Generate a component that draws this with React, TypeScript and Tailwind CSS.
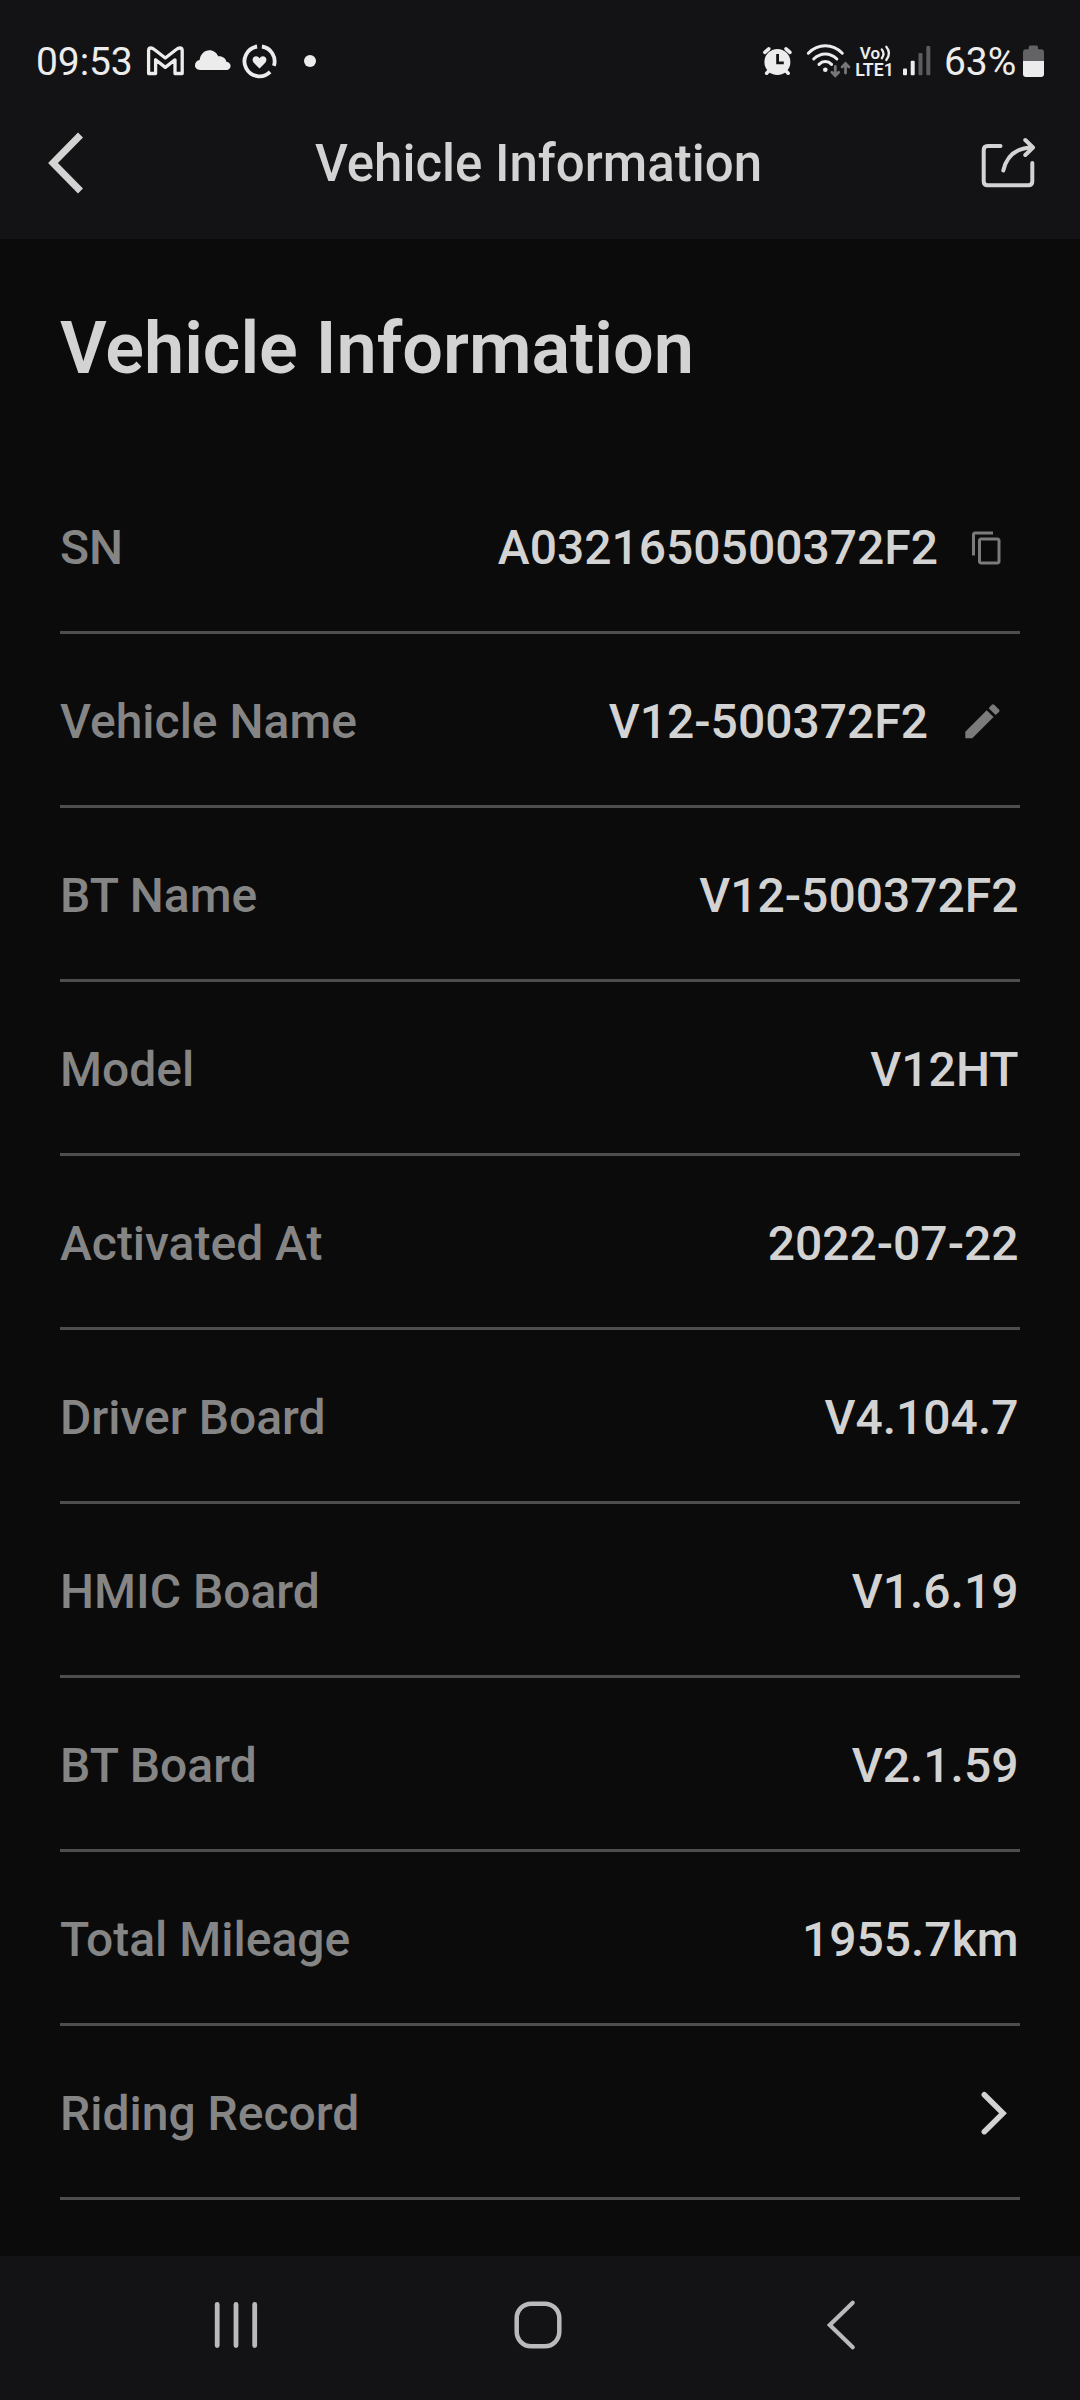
import React from "react";
import { MdContentCopy } from "react-icons/md";

interface InfoRow {
  label: string;
  value?: string;
  action?: "copy" | "edit" | "open";
}

const rows: InfoRow[] = [
  { label: "SN", value: "A0321650500372F2", action: "copy" },
  { label: "Vehicle Name", value: "V12-500372F2", action: "edit" },
  { label: "BT Name", value: "V12-500372F2" },
  { label: "Model", value: "V12HT" },
  { label: "Activated At", value: "2022-07-22" },
  { label: "Driver Board", value: "V4.104.7" },
  { label: "HMIC Board", value: "V1.6.19" },
  { label: "BT Board", value: "V2.1.59" },
  { label: "Total Mileage", value: "1955.7km" },
  { label: "Riding Record", action: "open" },
];

const StatusBar: React.FC = () => (
  <div className="flex h-[88px] items-center justify-between pt-[34px] pl-[36px] pr-[32px] text-[#ececec]">
    <div className="flex items-center">
      <span className="w-[108px] whitespace-nowrap pt-[2px] text-[39px] leading-none tracking-[-0.1px]">
        09:53
      </span>

      {/* MAIL */}
      <svg width="48" height="40" viewBox="0 0 48 40" fill="none">
        <path
          d="M4.6 32.5V9.6Q4.6 7 7 7Q8.4 7 10 8.3L21.3 17L32.6 8.3Q34.2 7 35.8 7Q38.2 7 38.2 9.6V32.5H31V18.8L21.3 26.4L11.6 18.8V32.5Z"
          stroke="currentColor"
          strokeWidth="3.3"
          strokeLinejoin="round"
        />
      </svg>

      {/* CLOUD */}
      <svg width="48" height="40" viewBox="0 0 48 40" fill="currentColor">
        <path d="M8 29C5 29 3 27 3 24.3C3 21.4 5 19.4 7.6 19C8.4 13.2 12.3 9.2 17.5 9.2C21.5 9.2 24.5 11.5 26.2 15.3C30.4 14.8 33.6 17.2 34.4 20.7C37 21 38.6 22.7 38.6 25C38.6 27.3 36.9 29 34.5 29Z" />
      </svg>

      {/* WELLBEING RING */}
      <svg width="40" height="40" viewBox="0 0 40 40" fill="none">
        <path
          d="M21.9 5.5A15 15 0 0 1 33.9 24.9M30.1 30.9A15 15 0 1 1 17.1 5.5"
          stroke="currentColor"
          strokeWidth="3.8"
        />
        <path
          d="M19.5 27.5L14 22C11 18.5 13.3 15.3 16 15.3C17.6 15.3 18.8 16.2 19.5 17.4C20.2 16.2 21.4 15.3 23 15.3C25.7 15.3 28 18.5 25 22Z"
          fill="currentColor"
        />
      </svg>

      <span className="ml-6 h-3 w-3 rounded-full bg-[#ececec]" />
    </div>

    <div className="flex items-center">
      {/* ALARM */}
      <svg width="44" height="40" viewBox="0 0 44 40" fill="none">
        <path
          d="M4.8 11.3L8.8 7.8M30 11.3L26 7.8M6.6 32.2L10 28.8M28.2 32.2L24.8 28.8"
          stroke="currentColor"
          strokeWidth="3.6"
          strokeLinecap="round"
        />
        <circle cx="17.4" cy="21" r="13" fill="currentColor" />
        <path d="M17.6 13V21.8H23.8" stroke="#131315" strokeWidth="2.8" />
      </svg>

      {/* WIFI */}
      <svg width="50" height="40" viewBox="0 0 50 40" fill="none" strokeLinecap="round">
        <path
          d="M4.3 12.2Q11.8 4.8 21.3 4.8T38.3 12.2M9.7 18Q14.8 12.9 21.3 12.9T32.9 18M15 23.4Q17.8 20.6 21.3 20.6T27.6 23.4"
          stroke="currentColor"
          strokeWidth="3"
        />
        <circle cx="21.3" cy="28.7" r="2.3" fill="currentColor" />
        <path
          d="M31.3 25.5V34.5M27.9 31.3L31.3 34.7L34.7 31.3M41.5 32V22.8M38.1 26L41.5 22.6L44.9 26"
          stroke="#767678"
          strokeWidth="2.8"
        />
      </svg>

      {/* VOLTE */}
      <svg width="46" height="40" viewBox="0 0 46 40" fill="none">
        <text x="5.8" y="18" fontSize="17" fontWeight="600" fill="currentColor">
          Vo
        </text>
        <text
          x="1.3"
          y="35"
          fontSize="17.5"
          fontWeight="600"
          fill="currentColor"
          textLength="38.5"
          lengthAdjust="spacingAndGlyphs"
        >
          LTE1
        </text>
        <path
          d="M27.8 8.5Q31.2 12.8 27.8 17.2M32.3 5.8Q37.6 12.3 32.3 19"
          stroke="currentColor"
          strokeWidth="2.3"
          strokeLinecap="round"
        />
      </svg>

      {/* SIGNAL */}
      <svg width="44" height="40" viewBox="0 0 44 40">
        <rect x="3" y="27.5" width="4" height="6.8" rx="1" fill="currentColor" />
        <rect x="10.7" y="19.8" width="4" height="14.5" rx="1" fill="currentColor" />
        <rect x="18.5" y="12" width="4" height="22.3" rx="1" fill="#5c5c5e" />
        <rect x="26.3" y="5" width="4" height="29.3" rx="1" fill="#5c5c5e" />
      </svg>

      <span className="w-[76px] whitespace-nowrap pt-[2px] text-[39px] leading-none tracking-[-0.1px]">
        63%
      </span>

      {/* BATTERY */}
      <svg width="28" height="40" viewBox="0 0 28 40">
        <path
          d="M3 20V11.5Q3 8.3 6 8.3H8.7V6Q8.7 4.5 10.2 4.5H16.5Q18 4.5 18 6V8.3H21Q24 8.3 24 11.5V20Z"
          fill="#636365"
        />
        <path d="M3 20H24V33Q24 36 21 36H6Q3 36 3 33Z" fill="currentColor" />
      </svg>
    </div>
  </div>
);

const Header: React.FC = () => (
  <header className="flex h-[151px] items-center justify-between pb-px pl-[45px] pr-[40px] text-[#d3d3d3]">
    <button className="w-[62px]">
      <svg width="44" height="64" viewBox="0 0 44 64" fill="none">
        <path d="M35.5 4L8 32L35.5 60" stroke="currentColor" strokeWidth="7" />
      </svg>
    </button>

    <h2 className="mr-[8px] text-[51px] font-medium leading-none">
      Vehicle Information
    </h2>

    <button>
      <svg
        width="62"
        height="58"
        viewBox="0 0 62 58"
        fill="none"
        stroke="currentColor"
        strokeWidth="4"
        strokeLinecap="round"
        strokeLinejoin="round"
      >
        <path d="M22.5 12H9.7Q5.7 12 5.7 16V47.3Q5.7 51.3 9.7 51.3H50.3Q54.3 51.3 54.3 47.3V29" />
        <path d="M25.3 36.5Q30.5 14 54.5 13.5M47.3 6L55 13.5L47.3 21" />
      </svg>
    </button>
  </header>
);

const Row: React.FC<{ row: InfoRow }> = ({ row }) => (
  <li className="flex h-[174px] items-center justify-between border-b-[3px] border-[#4e4e50] pt-1 text-[48px] font-medium leading-none">
    <span className="text-[#858585]">{row.label}</span>

    <div className="flex items-center text-[#d3d3d3]">
      {row.value && <span className={row.action ? "" : "mr-[1.5px]"}>{row.value}</span>}

      {row.action === "copy" && (
        <MdContentCopy size={36} className="ml-[31px] mr-[15px] text-[#7b7b7b]" />
      )}

      {row.action === "edit" && (
        <svg
          width="46"
          height="46"
          viewBox="0 0 46 46"
          fill="#7b7b7b"
          className="mb-[2px] ml-[32px] mr-[14px]"
        >
          <path d="M5.3 33.8L26.7 12.2L33.6 19.1L12.3 40.3H5.3Z" />
          <path d="M28.7 10.2L31.8 6.8Q33 5.6 34.2 6.8L39 11.6Q40.2 12.8 39 14L35.6 17.1Z" />
        </svg>
      )}

      {row.action === "open" && (
        <svg width="48" height="48" viewBox="0 0 48 48" fill="none">
          <path
            d="M12.3 4.7L31 23.2L12.3 41.7"
            stroke="currentColor"
            strokeWidth="5.5"
            strokeLinecap="round"
          />
        </svg>
      )}
    </div>
  </li>
);

const NavBar: React.FC = () => (
  <nav className="flex h-[144px] items-center justify-between px-[206px] pb-[6px] text-[#bababc]">
    <svg width="60" height="60" viewBox="0 0 60 60" fill="none">
      <path
        d="M11.2 9.5V50.5M30 9.5V50.5M48.7 9.5V50.5"
        stroke="currentColor"
        strokeWidth="4.8"
        strokeLinecap="round"
      />
    </svg>
    <svg width="60" height="60" viewBox="0 0 60 60" fill="none">
      <rect
        x="6.7"
        y="8.7"
        width="42.6"
        height="42.6"
        rx="14.5"
        stroke="currentColor"
        strokeWidth="4.5"
      />
    </svg>
    <svg width="60" height="60" viewBox="0 0 60 60" fill="none">
      <path
        d="M38.7 7.8L15.8 30L38.7 52.2"
        stroke="currentColor"
        strokeWidth="4.2"
        strokeLinecap="round"
      />
    </svg>
  </nav>
);

const App: React.FC = () => {
  return (
    <div className="flex h-[2400px] w-[1080px] flex-col overflow-hidden bg-[#131315] font-['Roboto',sans-serif]">
      <StatusBar />
      <Header />

      <main className="flex-1 bg-[#0b0b0b] px-[60px]">
        <h1 className="flex h-[221px] items-center pb-[2px] text-[72px] font-semibold leading-none text-[#d3d3d3]">
          Vehicle Information
        </h1>

        <ul>
          {rows.map((row) => (
            <Row key={row.label} row={row} />
          ))}
        </ul>
      </main>

      <NavBar />
    </div>
  );
};

export default App;
